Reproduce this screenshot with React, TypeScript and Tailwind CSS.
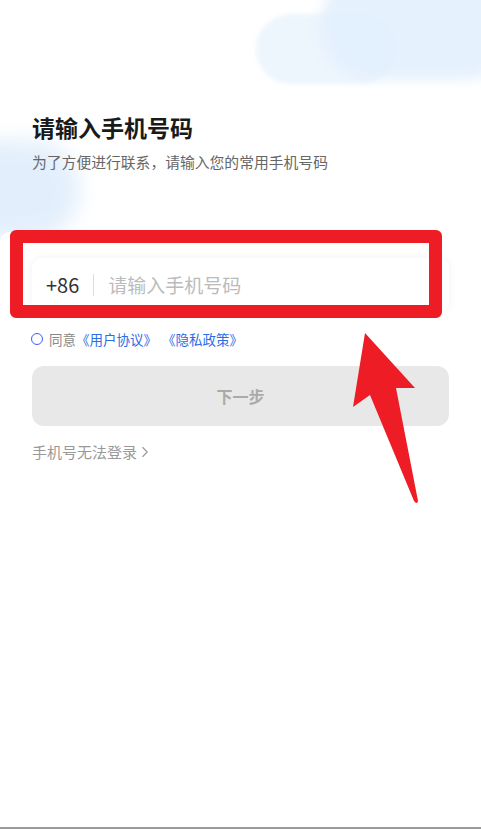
import { ChevronRight } from 'lucide-react';

const font = { fontFamily: '"Noto Sans CJK SC", "Noto Sans", sans-serif' };

function Clouds() {
    return (
        <>
            {/* top right cloud */}
            <div className="absolute left-[256px] top-[14px] w-[140px] h-[70px] rounded-full bg-[#e9f3fd] opacity-80 blur-[2px]" />
            <div className="absolute left-[320px] top-[-30px] w-[200px] h-[110px] rounded-full bg-[#e3f0fd] opacity-90 blur-[6px]" />
            {/* left cloud */}
            <div className="absolute left-[-70px] top-[140px] w-[150px] h-[100px] rounded-full bg-[#dcebfb] opacity-80 blur-[10px]" />
            <div className="absolute left-0 top-[232px] w-full h-[600px] bg-white rounded-tl-[10px]" />
        </>
    );
}

function Arrow() {
    return (
        <svg className="absolute left-0 top-0 pointer-events-none" width="481" height="829" viewBox="0 0 481 829">
            <path
                d="M365 333 L415 388 L396 388 L418 501 Q417 505 414 501 L370 395 L353 407 Z"
                fill="#ee1c25"
            />
        </svg>
    );
}

export default function App() {
    return (
        <div className="relative w-[481px] h-[829px] overflow-hidden bg-white border-b-2 border-[#9a9a9a]" style={font}>
            <Clouds />

            <div className="relative px-8 pt-[112px]">
                <h1 className="text-[23px] leading-[30px] font-bold text-[#1a1a1a]">请输入手机号码</h1>
                <p className="mt-[10px] text-[14.8px] leading-[20px] text-[#666]">为了方便进行联系，请输入您的常用手机号码</p>

                {/* phone input */}
                <div className="mt-[86px] h-[54px] flex items-center rounded-[10px] bg-white shadow-[0_0_10px_rgba(0,0,0,0.06)] px-[14px]">
                    <span className="text-[20px] text-[#333]">+86</span>
                    <span className="mx-[14px] w-px h-[22px] bg-[#ddd]" />
                    <span className="text-[19px] text-[#bbb]">请输入手机号码</span>
                </div>

                {/* agreement */}
                <div className="mt-[18px] flex items-center text-[13.5px] leading-[18px]">
                    <span className="ml-[-1px] w-[12px] h-[12px] rounded-full border-[1.5px] border-[#3d5ef5]" />
                    <span className="ml-[6px] text-[#888]">同意</span>
                    <span className="text-[#2b6de5]">《用户协议》</span>
                    <span className="ml-[5px] text-[#2b6de5]">《隐私政策》</span>
                </div>

                <button className="mt-[18px] w-full h-[60px] rounded-[12px] bg-[#e8e8e8] text-[16px] font-bold text-[#aaa]">
                    下一步
                </button>

                <div className="mt-[16px] flex items-center text-[15px] leading-[20px] text-[#999]">
                    手机号无法登录
                    <ChevronRight size={18} strokeWidth={1.5} className="ml-[-1px]" />
                </div>
            </div>

            {/* red highlight box */}
            <div className="absolute left-[10px] top-[230px] w-[432px] h-[88px] rounded-[6px] border-[13px] border-[#ee1c25]" />
            <Arrow />
        </div>
    );
}
